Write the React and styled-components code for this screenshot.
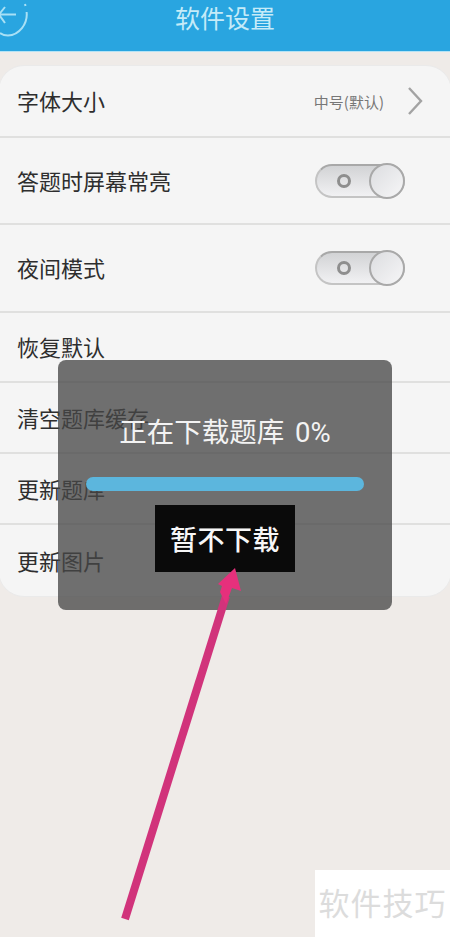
import React from 'react'
import styled, { createGlobalStyle } from 'styled-components'

const FONT = '"Noto Sans CJK SC", "Liberation Sans", sans-serif'

const rows = [
  { label: '字体大小', height: 72, value: '中号(默认)' },
  { label: '答题时屏幕常亮', height: 87, toggle: true },
  { label: '夜间模式', height: 88, toggle: true },
  { label: '恢复默认', height: 70 },
  { label: '清空题库缓存', height: 71 },
  { label: '更新题库', height: 71 },
  { label: '更新图片', height: 71, last: true },
]

const App = () => (
  <Page>
    <GlobalStyle />
    <Header>
      <BackIcon width="30" height="38" viewBox="0 0 30 38">
        <path d="M25 4 L25.5 6 M26.6 12 C28 24 19 35 8 35.5 C5 35.5 2 34.5 0 33" fill="none" stroke="#a8e0f5" strokeWidth="2" />
        <path d="M16 14.5 H0 M5 7 L-1 14.5 L5 23" fill="none" stroke="#a8e0f5" strokeWidth="2" />
      </BackIcon>
      <Title>软件设置</Title>
    </Header>
    <Card>
      {rows.map(r => (
        <Row key={r.label} $height={r.height} $last={r.last}>
          <Label>{r.label}</Label>
          {r.value && (
            <Value>
              <small>{r.value}</small>
              <svg width="18" height="30" viewBox="0 0 18 30">
                <path d="M3 2 L15 15 L3 28" fill="none" stroke="#a3a3a3" strokeWidth="2.4" />
              </svg>
            </Value>
          )}
          {r.toggle && (
            <Toggle>
              <ToggleDot />
              <Knob />
            </Toggle>
          )}
        </Row>
      ))}
    </Card>
    <Dialog>
      <DialogText>正在下载题库 0%</DialogText>
      <Progress />
      <CancelButton>暂不下载</CancelButton>
    </Dialog>
    <Arrow width="450" height="937" viewBox="0 0 450 937">
      <path d="M125 919 L226 596" fill="none" stroke="#d1337b" strokeWidth="8" />
      <path d="M235 568 L241 591 L232 588 L226 604 L220 592 L222 586 L218 584 Z" fill="#e6307c" />
    </Arrow>
    <Watermark>软件技巧</Watermark>
  </Page>
)

export default App

const GlobalStyle = createGlobalStyle`
  html, body {
    margin: 0;
    padding: 0;
    background: #efebe8;
  }
`

const Page = styled.div`
  position: relative;
  width: 450px;
  height: 937px;
  overflow: hidden;
  background: #efebe8;
  font-family: ${FONT};
`

const Header = styled.header`
  position: relative;
  height: 51px;
  display: flex;
  align-items: center;
  justify-content: center;
  background: #29a5e0;
  border-bottom: 1px solid #b5e3f5;
`

const BackIcon = styled.svg`
  position: absolute;
  left: 0;
  top: 0;
`

const Title = styled.h1`
  margin: 0 0 17px;
  font-size: 25px;
  font-weight: 400;
  line-height: 1;
  color: #c5ebf8;
`

const Card = styled.section`
  margin: 13px -2px 0;
  background: #f5f5f5;
  border: 1px solid #eaeaea;
  border-radius: 26px;
`

const Row = styled.div`
  height: ${p => p.$height}px;
  padding: 0 27px 0 18px;
  box-sizing: border-box;
  display: flex;
  align-items: center;
  justify-content: space-between;
  border-bottom: ${p => (p.$last ? 'none' : '2px solid #e0e0df')};
`

const Label = styled.span`
  margin-bottom: 2px;
  font-size: 22px;
  color: #2e2e2e;
  line-height: 1;
`

const Value = styled.div`
  display: flex;
  align-items: center;
  gap: 22px;
  small {
    font-size: 15px;
    color: #777;
  }
`

const Toggle = styled.div`
  position: relative;
  width: 90px;
  height: 34px;
  margin-right: 19px;
  box-sizing: border-box;
  display: flex;
  align-items: center;
  padding-left: 20px;
  border: 2px solid #c4c4c4;
  border-top-color: #a8a8a8;
  border-radius: 17px;
  background: linear-gradient(#d2d3d5, #f1f1f3);
`

const ToggleDot = styled.span`
  width: 14px;
  height: 14px;
  box-sizing: border-box;
  border: 3px solid #8e8e8e;
  border-radius: 50%;
`

const Knob = styled.span`
  position: absolute;
  top: -3px;
  right: -2px;
  width: 36px;
  height: 36px;
  box-sizing: border-box;
  border: 2px solid #a9a9a9;
  border-radius: 50%;
  background: linear-gradient(135deg, #dcdde0, #f6f6f7);
`

const Dialog = styled.div`
  position: absolute;
  left: 58px;
  top: 360px;
  width: 334px;
  height: 250px;
  box-sizing: border-box;
  padding-top: 57px;
  display: flex;
  flex-direction: column;
  align-items: center;
  border-radius: 8px;
  background: rgba(70, 70, 70, 0.77);
`

const DialogText = styled.div`
  font-family: Roboto, ${FONT};
  font-size: 27.5px;
  line-height: 32px;
  word-spacing: 4px;
  color: #f3f3f3;
  white-space: pre;
`

const Progress = styled.div`
  width: 278px;
  height: 14px;
  margin-top: 28px;
  border-radius: 7px;
  background: #5cb6dd;
`

const CancelButton = styled.div`
  width: 140px;
  height: 67px;
  margin-top: 14px;
  display: flex;
  align-items: center;
  justify-content: center;
  background: #0a0a0a;
  color: #f7f7f7;
  font-size: 27px;
  font-weight: 500;
  letter-spacing: 0.5px;
`

const Arrow = styled.svg`
  position: absolute;
  left: 0;
  top: 0;
  pointer-events: none;
`

const Watermark = styled.div`
  position: absolute;
  right: 0;
  bottom: 0;
  width: 135px;
  height: 67px;
  padding-bottom: 4px;
  box-sizing: border-box;
  display: flex;
  align-items: center;
  justify-content: center;
  background: #fff;
  color: #dcdcdc;
  font-size: 31px;
  letter-spacing: 1px;
`
